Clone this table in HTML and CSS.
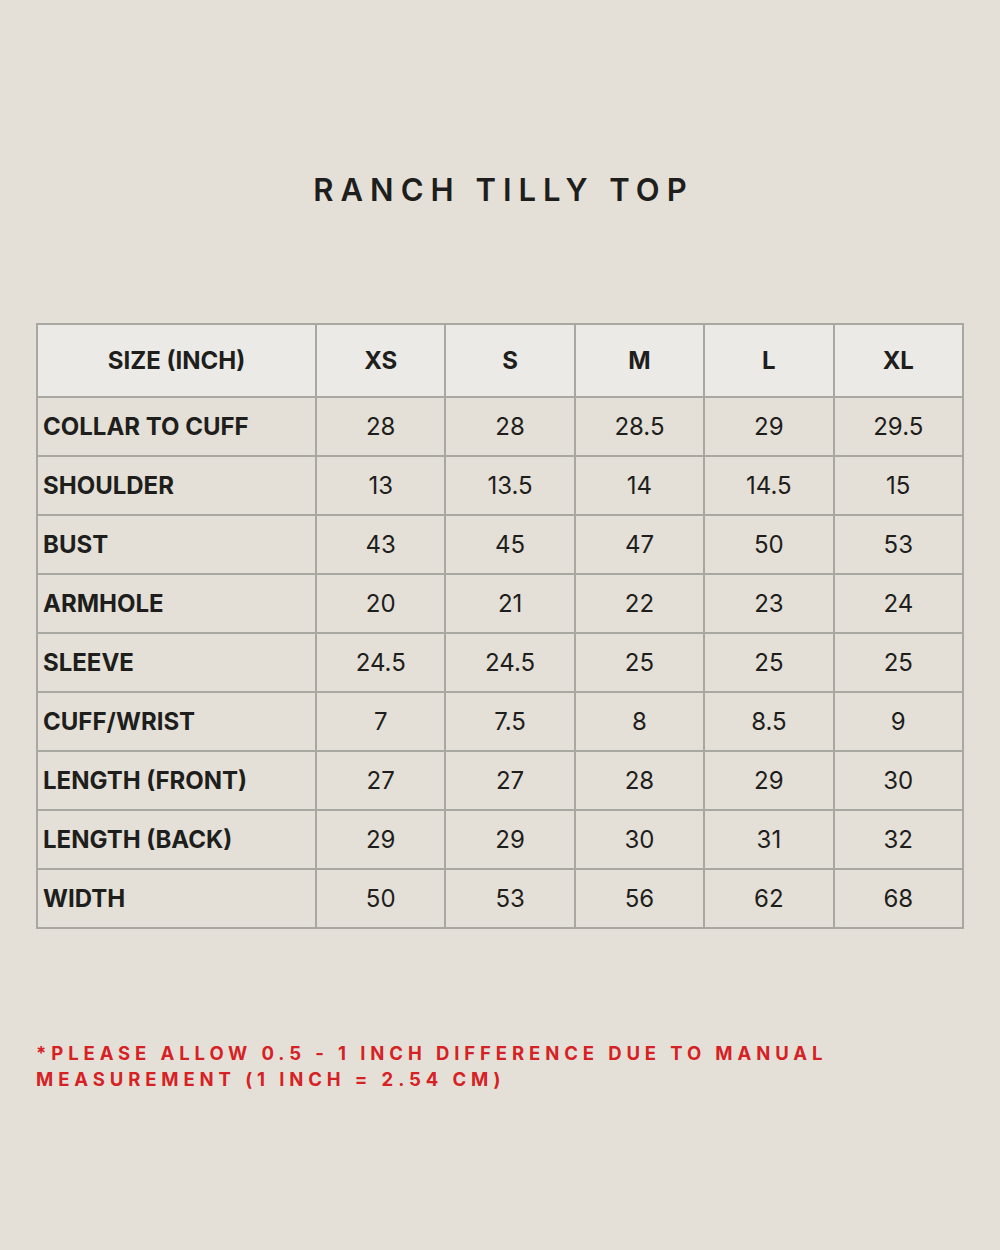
FILE: index.html
```html
<!DOCTYPE html>
<html>
<head>
<meta charset="utf-8">
<link rel="stylesheet" href="styles.css">
</head>
<body>
<div class="page">
  <h1 class="title">RANCH TILLY TOP</h1>
  <table class="chart">
    <thead>
      <tr><th class="label-head">SIZE (INCH)</th><th>XS</th><th>S</th><th>M</th><th>L</th><th>XL</th></tr>
    </thead>
    <tbody>
      <tr><th>COLLAR TO CUFF</th><td>28</td><td>28</td><td>28.5</td><td>29</td><td>29.5</td></tr>
      <tr><th>SHOULDER</th><td>13</td><td>13.5</td><td>14</td><td>14.5</td><td>15</td></tr>
      <tr><th>BUST</th><td>43</td><td>45</td><td>47</td><td>50</td><td>53</td></tr>
      <tr><th>ARMHOLE</th><td>20</td><td>21</td><td>22</td><td>23</td><td>24</td></tr>
      <tr><th>SLEEVE</th><td>24.5</td><td>24.5</td><td>25</td><td>25</td><td>25</td></tr>
      <tr><th>CUFF/WRIST</th><td>7</td><td>7.5</td><td>8</td><td>8.5</td><td>9</td></tr>
      <tr><th>LENGTH (FRONT)</th><td>27</td><td>27</td><td>28</td><td>29</td><td>30</td></tr>
      <tr><th>LENGTH (BACK)</th><td>29</td><td>29</td><td>30</td><td>31</td><td>32</td></tr>
      <tr><th>WIDTH</th><td>50</td><td>53</td><td>56</td><td>62</td><td>68</td></tr>
    </tbody>
  </table>
  <p class="note">*PLEASE ALLOW 0.5 - 1 INCH DIFFERENCE DUE TO MANUAL MEASUREMENT (1 INCH = 2.54 CM)</p>
</div>
</body>
</html>
```

FILE: styles.css
```css
html, body {
  margin: 0;
  padding: 0;
  background: #e4e0d7;
}
.page {
  width: 1000px;
  height: 1250px;
  box-sizing: border-box;
  padding: 172px 36px 0 36px;
  font-family: Inter, "Liberation Sans", sans-serif;
  color: #1e1e1c;
}
.title {
  margin: 0 0 115px 0;
  text-align: center;
  font-size: 31px;
  font-weight: 600;
  letter-spacing: 7px;
  line-height: 36px;
  padding-left: 7px;
}
.chart {
  width: 928px;
  border-collapse: collapse;
  table-layout: fixed;
  border: 2px solid #a9a7a1;
}
.chart th, .chart td {
  border: 2px solid #a9a7a1;
  height: 57px;
  padding: 0;
  font-size: 24px;
  text-align: center;
}
.chart th:first-child { width: 277px; }
.chart thead th {
  background: #ebeae6;
  height: 71px;
  font-weight: 700;
}
.chart tbody th {
  text-align: left;
  padding-left: 5px;
  font-weight: 700;
}
.chart tbody td {
  font-weight: 400;
}
.note {
  margin: 111px 0 0 0;
  width: 860px;
  color: #d62125;
  font-size: 18.5px;
  font-weight: 700;
  letter-spacing: 4.9px;
  line-height: 26px;
}
```
